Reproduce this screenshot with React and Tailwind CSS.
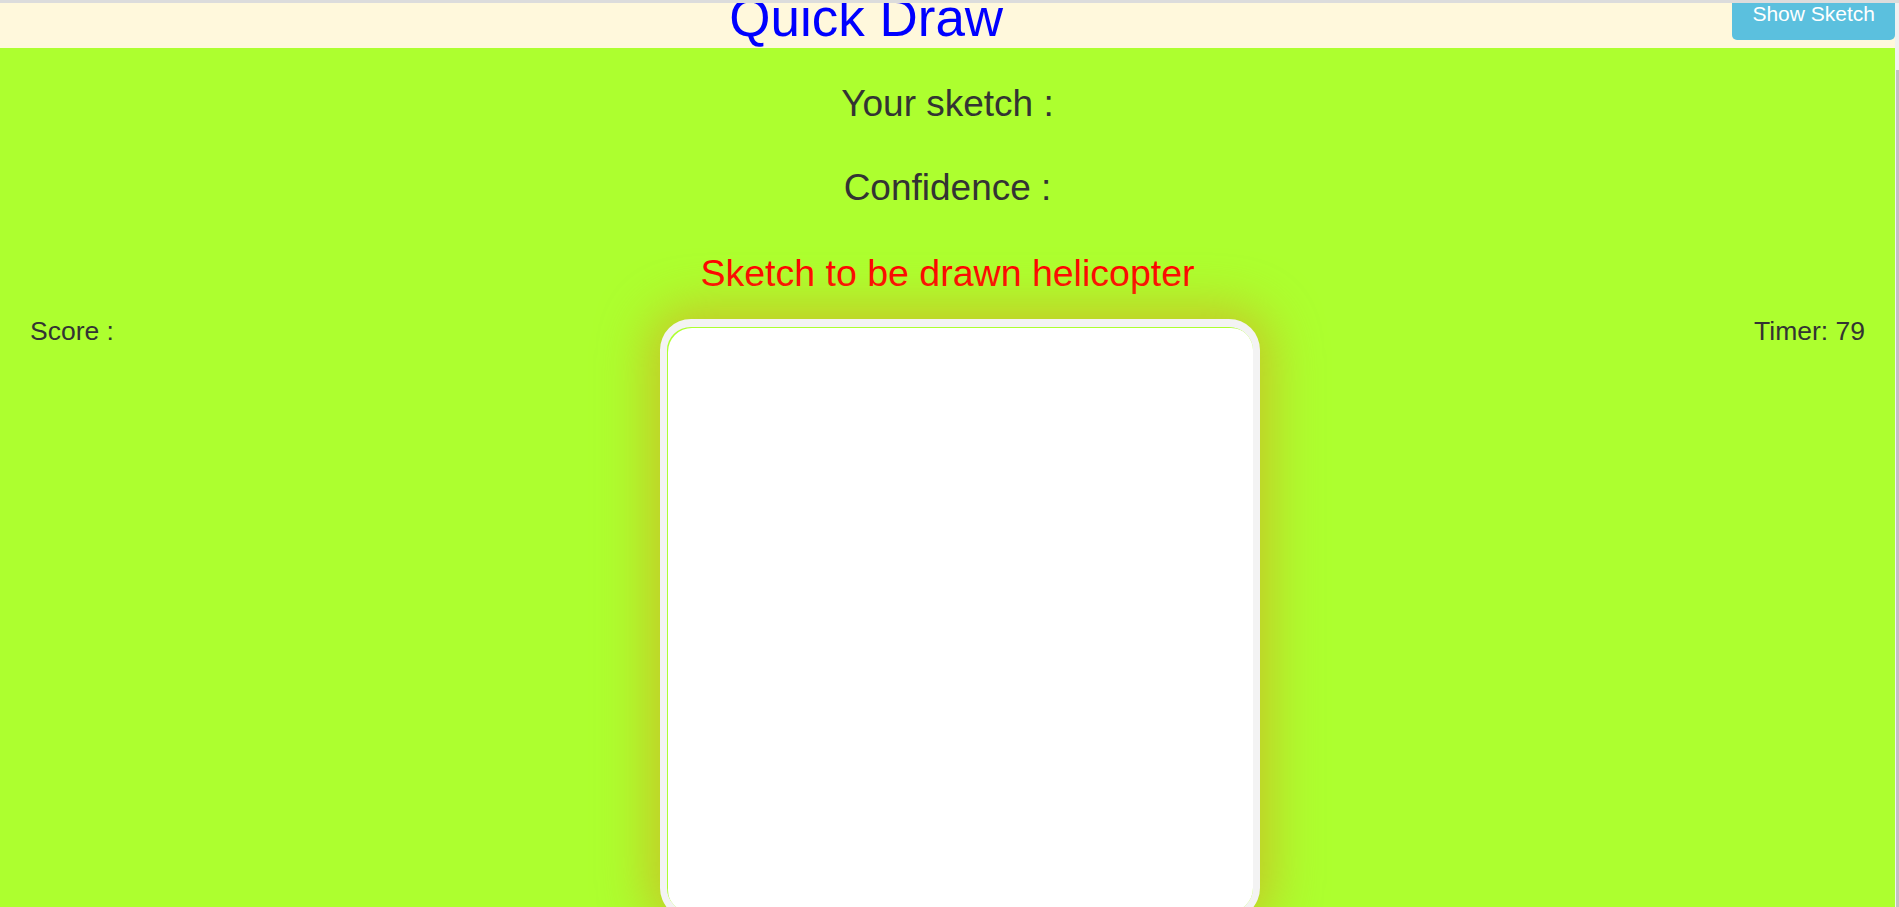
export default function App() {
  return (
    <div className="h-[907px] w-full overflow-hidden bg-[#adff2f] font-['Liberation_Sans',Arial,sans-serif]">
      <div className="h-[3px] w-full bg-[#dcdcdc]"></div>
      <div className="flex h-[904px]">
        <div className="flex min-w-0 flex-1 flex-col">
          {/* header */}
          <div className="flex h-[45px] shrink-0 items-start overflow-hidden bg-[#fff8dc]">
            <div className="flex flex-1 justify-center">
              <h1 className="mt-[-12px] text-[53px] leading-[53px] font-normal text-[#0000ff]">Quick Draw</h1>
            </div>
            <button className="mt-[-12px] rounded-b-[5px] bg-[#5bc0de] px-[20px] pt-[11px] pb-[14px] text-[21px] leading-[24px] text-white">
              Show Sketch
            </button>
          </div>

          {/* game area */}
          <div className="flex flex-1 flex-col bg-[#adff2f] pt-[35px] text-[#333]">
            <p className="text-center text-[37px] leading-[42px]">Your sketch :</p>
            <p className="mt-[42px] text-center text-[37px] leading-[42px]">Confidence :</p>
            <p className="mt-[43px] text-center text-[37.5px] leading-[42px] text-[#ff0000]">Sketch to be drawn helicopter</p>

            <div className="mt-[22px] flex shrink-0 items-start px-[30px]">
              <div className="w-[630px] text-[26.5px] leading-[31px]">Score :</div>
              <div className="mt-[3px] h-[600px] w-[600px] shrink-0 overflow-hidden rounded-[31px] border-[7px] border-t-[8px] border-[#f3f3f3] bg-[#adff2f] pt-[1px] pl-[1px] shadow-[0_0_50px_12px_rgba(205,180,35,0.75)]">
                <div className="h-[calc(100%+2px)] w-[calc(100%+2px)] rounded-[24px] bg-white"></div>
              </div>
              <div className="flex-1 text-right text-[26.5px] leading-[31px]">Timer: 79</div>
            </div>
          </div>
        </div>

        {/* scrollbar */}
        <div className="flex w-[4px] flex-col bg-[#f1f1f1]">
          <div className="h-[67px]"></div>
          <div className="ml-[1px] flex-1 bg-[#c1c1c1]"></div>
        </div>
      </div>
    </div>
  )
}
